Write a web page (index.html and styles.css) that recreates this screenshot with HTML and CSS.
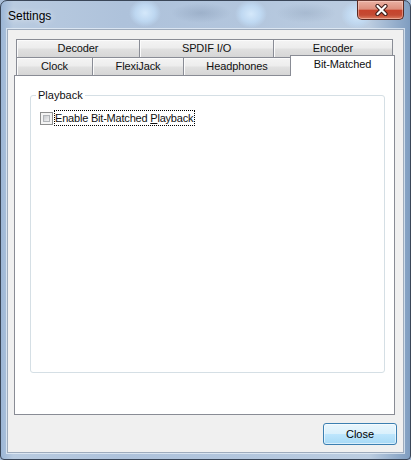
FILE: index.html
```html
<!DOCTYPE html>
<html>
<head>
<meta charset="utf-8">
<title>Settings</title>
<link rel="stylesheet" href="styles.css">
</head>
<body>
<div class="window">
  <div class="titlebar">
    <span class="title">Settings</span>
    <div class="cap-close">
      <svg width="15" height="12" viewBox="0 0 15 12">
        <path d="M3.5 2 L11.5 10 M11.5 2 L3.5 10" stroke="#3b1a17" stroke-width="4.2" stroke-linecap="round" fill="none"/>
        <path d="M3.5 2 L11.5 10 M11.5 2 L3.5 10" stroke="#ffffff" stroke-width="2.2" stroke-linecap="round" fill="none"/>
      </svg>
    </div>
  </div>
  <div class="client">
    <div class="tabs">
      <div class="row">
        <div class="tab w-decoder">Decoder</div>
        <div class="tab w-spdif">SPDIF I/O</div>
        <div class="tab w-encoder last">Encoder</div>
      </div>
      <div class="row">
        <div class="tab w-clock">Clock</div>
        <div class="tab w-flexi">FlexiJack</div>
        <div class="tab w-head last">Headphones</div>
        <div class="tab sel">Bit-Matched</div>
      </div>
      <div class="panel">
        <fieldset class="group">
          <legend>Playback</legend>
          <div class="opt">
            <span class="cb"><span class="cb-in"></span></span>
            <span class="cb-label">Enable Bit-Matched <u>P</u>layback</span>
          </div>
        </fieldset>
      </div>
    </div>
    <div class="actions">
      <button class="btn">Close</button>
    </div>
  </div>
</div>
</body>
</html>
```
FILE: styles.css
```css
html, body {
  margin: 0;
  padding: 0;
  background: #a9bed8;
}

.window {
  width: 411px;
  height: 460px;
  box-sizing: border-box;
  border: 1px solid #3a4658;
  border-radius: 7px 7px 4px 4px;
  padding: 0 6px 6px 6px;
  display: flex;
  flex-direction: column;
  font-family: "Liberation Sans", Arial, sans-serif;
  background:
    radial-gradient(ellipse 16px 14px at 144px 12px, rgba(214, 234, 252, 0.95) 0, rgba(196, 224, 250, 0.7) 60%, rgba(196, 224, 250, 0) 100%),
    radial-gradient(ellipse 16px 14px at 250px 13px, rgba(214, 234, 252, 0.95) 0, rgba(196, 224, 250, 0.7) 60%, rgba(196, 224, 250, 0) 100%),
    radial-gradient(ellipse 16px 14px at 356px 14px, rgba(214, 234, 252, 0.9) 0, rgba(196, 224, 250, 0.6) 60%, rgba(196, 224, 250, 0) 100%),
    radial-gradient(ellipse 30px 10px at 200px 12px, rgba(120, 140, 168, 0.35) 0, rgba(120, 140, 168, 0) 100%),
    radial-gradient(ellipse 30px 10px at 305px 12px, rgba(130, 150, 175, 0.3) 0, rgba(130, 150, 175, 0) 100%),
    linear-gradient(to right, #9cb6d6 0, #b9cbe0 3%, #aec2db 30%, #b3c6dd 60%, #bccde1 90%, #7f9dc0 100%);
}

.titlebar {
  height: 28px;
  display: flex;
  justify-content: space-between;
  align-items: flex-start;
  flex: none;
}

.title {
  padding: 8px 0 0 1px;
  font-size: 12px;
  line-height: 14px;
  color: #000;
  text-shadow: 0 0 6px rgba(255, 255, 255, 0.9);
}

.cap-close {
  width: 47px;
  height: 20px;
  margin-top: -1px;
  box-sizing: border-box;
  border: 1px solid #5a2a22;
  border-top-color: #6b3a32;
  border-radius: 0 0 5px 5px;
  background: linear-gradient(to bottom, #eab1a3 0%, #dd8f7d 45%, #c7432c 52%, #c34a33 78%, #dc7e62 100%);
  box-shadow: inset 0 0 0 1px rgba(255, 220, 210, 0.45);
  display: flex;
  align-items: center;
  justify-content: center;
}

.cap-close svg {
  display: block;
  margin-left: 2px;
}

.client {
  flex: 1;
  border: 1px solid #9eabbc;
  box-shadow: 0 0 0 1px rgba(235, 242, 250, 0.7);
  background: #f0f0f0;
  padding: 9px 6px 7px 6px;
  display: flex;
  flex-direction: column;
}

.tabs {
  margin-right: 2px;
  display: flex;
  flex-direction: column;
}

.row {
  display: flex;
  align-items: flex-end;
  height: 18px;
  margin-left: 2px;
}

.tab {
  box-sizing: border-box;
  height: 18px;
  border: 1px solid #898c95;
  border-bottom: none;
  border-right: none;
  background: linear-gradient(to bottom, #f4f4f4 0%, #ededed 45%, #e0e0e0 55%, #d6d6d6 100%);
  box-shadow: inset 1px 1px 0 #fbfbfb;
  text-align: center;
  font-size: 11px;
  line-height: 17px;
  letter-spacing: -0.1px;
  color: #111;
  white-space: nowrap;
}

.tab.last {
  border-right: 1px solid #898c95;
}

.w-decoder { width: 123px; }
.w-spdif { width: 134px; }
.w-encoder { width: 120px; }
.w-clock { width: 76px; }
.w-flexi { width: 91px; }
.w-head { width: 108px; }

.tab.sel {
  width: 105px;
  height: 21px;
  margin-left: -1px;
  margin-bottom: -1px;
  border-right: 1px solid #898c95;
  background: #fff;
  box-shadow: none;
  position: relative;
  z-index: 1;
}

.panel {
  height: 340px;
  box-sizing: border-box;
  border: 1px solid #898c95;
  background: #fff;
  padding: 13px 9px 41px 15px;
  display: flex;
  flex-direction: column;
}

.group {
  flex: 1;
  min-width: 0;
  margin: 0;
  padding: 8px 5px 0 5px;
  border: 1px solid #d5dfe5;
  border-radius: 3px;
}

.group legend {
  padding: 0 2px;
  font-size: 11px;
  line-height: 13px;
  color: #111;
}

.opt {
  display: flex;
  align-items: center;
  height: 16px;
  margin-left: 4px;
}

.cb {
  width: 13px;
  height: 13px;
  box-sizing: border-box;
  border: 1px solid #8e8f8f;
  background: #f4f4f4;
  padding: 2px;
  flex: none;
}

.cb-in {
  display: block;
  width: 7px;
  height: 7px;
  box-sizing: border-box;
  border: 1px solid #b1b4b8;
  background: linear-gradient(135deg, #c8cbcf 0%, #e2e3e5 60%, #f1f1f1 100%);
}

.cb-label {
  margin-left: 1px;
  padding: 0 1px 0 0;
  border: 1px dotted #000;
  font-size: 11px;
  line-height: 14px;
  letter-spacing: -0.2px;
  color: #111;
  white-space: nowrap;
}

.actions {
  display: flex;
  justify-content: flex-end;
  margin-top: 8px;
}

.btn {
  width: 74px;
  height: 22px;
  box-sizing: border-box;
  margin: 0;
  padding: 0;
  border: 1px solid #3c7fb1;
  border-radius: 3px;
  background: linear-gradient(to bottom, #eaf6fd 0%, #d9f0fc 50%, #bee6fd 50%, #a7d9f5 100%);
  box-shadow: inset 0 0 0 1px rgba(255, 255, 255, 0.55);
  font-family: "Liberation Sans", Arial, sans-serif;
  font-size: 11px;
  line-height: 18px;
  color: #000;
}
```
